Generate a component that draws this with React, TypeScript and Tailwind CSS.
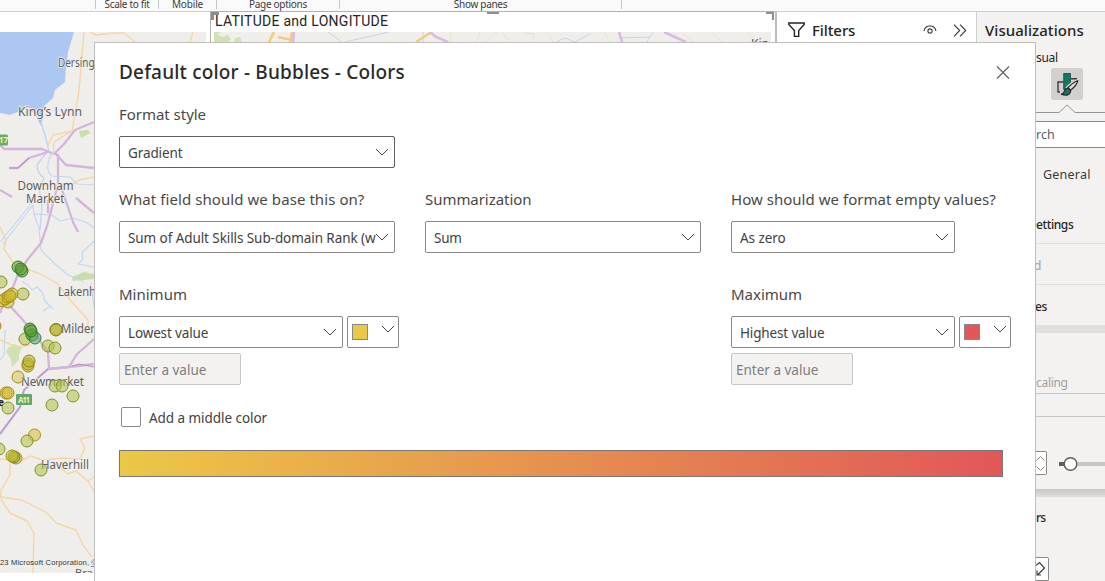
import type { ReactNode } from "react";

const INK = "#323130";

function Chevron({ className = "" }: { className?: string }) {
  return (
    <svg className={`shrink-0 ${className}`} width="14" height="8" viewBox="0 0 14 8" fill="none" stroke="#484644" strokeWidth="1">
      <path d="M1 1 L7 7 L13 1" />
    </svg>
  );
}

function Select({ text, width, spacing, dark = false }: { text: string; width: string; spacing: string; dark?: boolean }) {
  return (
    <div className={`flex h-8 items-center justify-between rounded-[2px] border bg-white pl-2 pr-[5px] ${dark ? "border-[#605e5c]" : "border-[#8a8886]"} ${width}`}>
      <span className={`mt-[3px] whitespace-nowrap text-[13.5px] text-[#424140] ${spacing}`}>{text}</span>
      <Chevron className={text.length > 30 ? "-ml-1" : ""} />
    </div>
  );
}

function ColorPick({ fill }: { fill: string }) {
  return (
    <div className="flex h-8 w-[52px] items-start justify-between rounded-[2px] border border-[#8a8886] bg-white pl-1 pr-[3px]">
      <div className={`mt-[7px] size-4 border border-[#8a8886] ${fill}`} />
      <Chevron className="mt-[8px]" />
    </div>
  );
}

function Label({ children, spacing }: { children: ReactNode; spacing: string }) {
  return <div className={`h-5 whitespace-nowrap text-[15px] leading-[18px] text-[#4a4846] ${spacing}`}>{children}</div>;
}

function EmptyInput() {
  return (
    <div className="mt-[5px] flex h-8 w-[122px] items-center rounded-[2px] border border-[#c8c6c4] bg-[#f3f2f1] pl-1">
      <span className="mt-[3px] text-[13.5px] tracking-[0px] text-[#807e7c]">Enter a value</span>
    </div>
  );
}

type Dot = [number, number, string, string];
const LIME = "#b5c34c";
const LIME_EDGE = "#7f9128";
const GOLD = "#cfba2c";
const GOLD_EDGE = "#a58b16";
const GREEN = "#5b9c33";
const GREEN_EDGE = "#2f7a20";

const dots: Dot[] = [
  [18, 267, GREEN, GREEN_EDGE], [22, 271, GREEN, GREEN_EDGE], [21, 269, GREEN, GREEN_EDGE],
  [1, 282, LIME, LIME_EDGE], [23, 294, LIME, LIME_EDGE],
  [2, 301, GOLD, GOLD_EDGE], [8, 302, GOLD, GOLD_EDGE], [5, 299, GOLD, GOLD_EDGE], [8, 297, GOLD, GOLD_EDGE], [12, 294, GOLD, GOLD_EDGE], [10, 296, GOLD, GOLD_EDGE],
  [-5, 326, GOLD, GOLD_EDGE], [25, 339, LIME, LIME_EDGE], [32, 335, GREEN, GREEN_EDGE], [35, 338, "#63a567", "#368044"], [30, 329, GREEN, GREEN_EDGE], [31, 331, GREEN, GREEN_EDGE],
  [56, 329.5, "#b8b52c", "#858616"], [56, 330, "#b8b52c", "#858616"], [48, 346, LIME, LIME_EDGE], [55, 348, LIME, LIME_EDGE],
  [28, 366, GOLD, GOLD_EDGE], [28, 364, "#b8b52c", GOLD_EDGE], [29, 361, "#b8b52c", "#858616"],
  [18, 377, "#d6c85e", GOLD_EDGE], [6, 393, GOLD, GOLD_EDGE], [8, 393, GOLD, GOLD_EDGE], [8, 408, LIME, LIME_EDGE],
  [55, 386, LIME, LIME_EDGE], [62, 386, LIME, LIME_EDGE], [73, 396, LIME, LIME_EDGE], [52, 405, LIME, LIME_EDGE],
  [34.5, 435, "#d9bd48", "#b09228"], [27, 441, LIME, LIME_EDGE], [-1, 449, LIME, LIME_EDGE],
  [16, 458, "#dfb33a", "#bd8c1c"], [14, 457, "#83a92e", "#5e8f22"], [12, 456, GOLD, GOLD_EDGE], [41, 470, LIME, LIME_EDGE],
];

function MainMap() {
  return (
    <svg className="block" width="206" height="541" viewBox="0 32 206 541" fontFamily="'Noto Sans', sans-serif">
      <rect y="32" width="206" height="541" fill="#f0eeeb" />
      <path d="M0 32 H74 L68 52 L66 67 L65 82 L55 90 L53 98 L44 106 L43 117 L41 126 L35 114 L29 108 L20 111 L10 115 L0 113Z" fill="#abc7f2" />
      <path d="M79 131 L88 130 L90 133 L81 138Z M72 277 L84 272 L94 274 L94 279 L73 281Z" fill="#c9dda9" />
      <path d="M8 348 L14 344 L22 347 L19 355 L19 360 L12 367 L11 359 L6 352Z" fill="#cfe2b1" />
      <g fill="none" stroke="#bfd7f2" strokeWidth="1.1" strokeLinejoin="round">
        <path d="M41 122 L46 139 L49 151 M46 153 L37 165 Q37 173 44 178 L39 188 L42 207 L40 230" strokeWidth="1.4" />
        <path d="M51 154 Q44 170 52 176 L70 177 L77 184 L94 185" />
        <path d="M32 203 L0 242 M33 205 L3 244 M33 205 L34 214 L39 228 L41 250 L54 263 L68 275 L84 282" />
        <path d="M34 214 L52 215 L60 221 L72 218 L86 222 L94 228 M94 241 L86 249 L82 252 L83 259 L78 264 L94 267" />
        <path d="M22 281 L28 285 L32 290 L37 287 L42 292 L45 301 L50 306 L43 311 M45 301 L53 309 M91 283 L94 307 M5 330 L4 355 L0 360" />
      </g>
      <g fill="none" stroke="#d3b5dc" strokeWidth="2.3" strokeLinejoin="round">
        <path d="M0 145 L4 149 L42 149 L54 154 L64 144 L75 130 L94 122" />
        <path d="M9 168 L18 168 L29 158 L48 152 M55 153 L66 165 L94 168" />
        <path d="M58 154 L58 184 L51 211 L47 226 L41 243 L28 259 L19 272 L11 292 L3 305 L0 313" />
        <path d="M60 184 L73 222 L78 232" />
        <path d="M0 190 L12 197 M76 198 L94 213 M48 200 L48 213" />
        <path d="M10 306 L22 319 L34 333 L48 352 L49 369 L78 366 L94 364" />
        <path d="M94 339 L84 348 L77 354 L69 367 L48 369 L24 390 L20 407 L0 434" />
      </g>
      <path d="M9 168 L18 168 L29 158 M72 366 L79 364 L94 367 M48 369 L24 390 L20 407 L0 434" stroke="#b795c4" strokeWidth="1.1" fill="none" />
      <g fill="none" stroke="#f4d6a5" strokeWidth="1.4" strokeLinejoin="round">
        <path d="M84 32 L82 55 L80 80 L78 97 L72 131 L53 135 L48 145 M53 155 L54 142 L70 132" />
        <path d="M90 32 L96 35 L113 33 L124 33 L135 42 M193 32 L190 42" />
        <path d="M94 177 L79 180 L70 186 M0 227 L6 240 L4 249 L15 265 L38 273 L57 283 L71 301 L88 320 L88 325" />
        <path d="M0 340 L17 347 L31 345 M0 459 L20 461 L31 456 L42 460 L62 458 L80 459 L85 448 L80 439 L94 436 M55 464 L68 474 L76 471 L88 481 L94 477 M88 481 L94 492" />
        <path d="M10 461 L10 475 L1 490 L1 498 M0 497 L22 500 L47 513 L56 523 L76 530 L83 545 L92 557 M1 499 L10 513 L27 521 L34 533 L33 573" />
      </g>
      <g fill="#5d5e60" stroke="#f0eeeb" strokeWidth="1.6" paintOrder="stroke" fontSize="11.7">
        <text x="58" y="67" textLength="36.5" lengthAdjust="spacingAndGlyphs">Dersing</text>
        <text x="18" y="116" textLength="64" lengthAdjust="spacingAndGlyphs">King’s Lynn</text>
        <text x="17.500" y="189.500" textLength="56" lengthAdjust="spacingAndGlyphs">Downham</text>
        <text x="26" y="202.500" textLength="38.500" lengthAdjust="spacingAndGlyphs">Market</text>
        <text x="58" y="295.500" textLength="38" lengthAdjust="spacingAndGlyphs">Lakenh</text>
        <text x="61" y="332.500" textLength="34" lengthAdjust="spacingAndGlyphs">Milder</text>
        <text x="21" y="385.500" textLength="63" lengthAdjust="spacingAndGlyphs">Newmarket</text>
        <text x="41" y="468.500" textLength="48" lengthAdjust="spacingAndGlyphs">Haverhill</text>
        <text x="75" y="577" fontSize="11">Bra</text>
      </g>
      <rect x="-8" y="134.500" width="16" height="11" rx="1.5" fill="#69ad6c" />
      <text x="-1" y="143" fontSize="8" fontWeight="700" fill="#f7f3a6">17</text>
      <rect x="16" y="394" width="16" height="11" rx="1" fill="#5fa672" />
      <text x="18" y="402.500" fontSize="8" fontWeight="700" fill="#f7f3a6" textLength="12">A11</text>
      <text x="-2" y="406" fontSize="10" fontWeight="700" fill="#222">e</text>
      {dots.map(([x, y, fill, stroke], i) => (
        <circle key={i} cx={x} cy={y} r="6" fill={fill} fillOpacity="0.58" stroke={stroke} strokeWidth="1" />
      ))}
      <text x="0" y="565" fontSize="7.5" fontFamily="'Liberation Sans', sans-serif" fill="#333" textLength="89">23 Microsoft Corporation,</text>
      <text x="91" y="565" fontSize="7.5" fontFamily="'Liberation Sans', sans-serif" fill="#3b66b8" textDecoration="underline">©</text>
    </svg>
  );
}

function StripMap() {
  return (
    <svg className="block" width="557" height="12" viewBox="214 32 557 12">
      <rect x="214" y="32" width="557" height="12" fill="#f0eeeb" />
      <path d="M214 32 H220 L218 35 L223 37 L228 35 L231 39 L227 44 H214Z M235 38 L240 37 L242 42 H234Z" fill="#cfe3b3" />
      <g fill="none" strokeWidth="1">
        <path d="M328 32 L342 42 M389 32 L345 42 M423 32 V42 M556 42 L565 38 L575 42 L590 34 M620 38 L650 37 M653 32 L647 42" stroke="#c5d5ec" />
        <path d="M450 32 L451 42 M480 32 L476 42 M497 32 L485 42 M502 32 L510 42 M522 33 L534 34 L533 42 M548 33 L553 42 M604 32 L610 42 M681 33 L694 42 M712 33 L722 42 M748 32 L757 42" stroke="#ede4c4" />
        <path d="M274 32 L269 42 M278 37 L292 40 M292 32 L290 42 M430 33 L416 42" stroke="#f4ca80" strokeWidth="2.6" />
        <path d="M294 32 L293 42 M430 32 L436 37 L448 42 M619 32 L622 42 M664 32 L686 42" stroke="#d6bce0" strokeWidth="2.6" />
      </g>
      <text x="751" y="48" fontSize="12" fontFamily="'Noto Sans', sans-serif" fill="#555">Kin</text>
    </svg>
  );
}

function Ribbon() {
  const t = "-mt-[3px] h-[14px] whitespace-nowrap text-center text-[10px] leading-[14px]";
  return (
    <div className="flex h-3 border-b border-[#d2d0ce] bg-[#fafafa] text-[#3b3a39]">
      <div className="h-[9px] w-24 border-r border-[#c8c6c4]" />
      <div className="h-[9px] w-[63px] border-r border-[#c8c6c4]"><div className={`${t} tracking-[-0.3px]`}>Scale to fit</div></div>
      <div className="h-[9px] w-[58px] border-r border-[#c8c6c4]"><div className={`${t} tracking-[-0.15px]`}>Mobile</div></div>
      <div className="h-[9px] w-[123px] border-r border-[#c8c6c4]"><div className={`${t} tracking-[-0.3px]`}>Page options</div></div>
      <div className="h-[9px] w-[282px] border-r border-[#c8c6c4]"><div className={`${t} tracking-[-0.3px]`}>Show panes</div></div>
    </div>
  );
}

function Filters() {
  return (
    <div className="flex h-9 items-center border-l-2 border-[#bdbbb9] bg-white pl-[11px] pr-[4px]">
      <svg width="17" height="16" viewBox="0 0 17 16" fill="none" stroke="#252423" strokeWidth="1.4">
        <path d="M0.8 1 H16.2 V2.5 L10.7 8.5 V14.4 H6.4 V8.5 L0.8 2.5Z" />
      </svg>
      <span className="ml-[7px] text-[15px] font-medium tracking-[-0.1px] text-[#252423]">Filters</span>
      <svg className="ml-auto" width="14" height="10" viewBox="0 0 14 10" fill="none" stroke="#3b3a39" strokeWidth="1.1">
        <path d="M1 6 Q2 1 7 1 Q12 1 13 6" />
        <circle cx="7" cy="6" r="2.1" />
      </svg>
      <svg className="ml-[16px] mr-[5px]" width="14" height="13" viewBox="0 0 14 13" fill="none" stroke="#3b3a39" strokeWidth="1.1">
        <path d="M1 0.7 L6.700 6.500 L1 12.300 M7 0.700 L12.700 6.500 L7 12.300" />
      </svg>
    </div>
  );
}

function FormatIcon() {
  return (
    <svg className="block rounded-[2px] bg-[#d2d0ce]" width="32" height="32" viewBox="0 0 32 32" fill="none">
      <path d="M12.500 14 H7 V24 H9 M20 10.700 H26" stroke="#3b3a39" strokeWidth="1.4" />
      <path d="M12.700 5.500 H19.500 V17 L14 21.500 H12.700Z" fill="#117865" stroke="#2b5049" strokeWidth="0.9" />
      <path d="M15.500 20.500 Q21 14.500 26.500 13 Q27 15 19.700 23" fill="#f3f2f1" stroke="#d2d0ce" strokeWidth="3" />
      <path d="M16.700 20 Q22 14.500 26.700 12.800 Q26 17 19.300 22.500Z" fill="#e1dfdd" stroke="#252423" strokeWidth="1.2" />
      <path d="M10 26.200 Q12.500 25.800 13.500 22.800 Q14.700 20.200 17 20.300 Q19.700 21 19.600 23.700 Q18.500 28.800 10 26.200Z" fill="#117865" stroke="#252423" strokeWidth="1.1" />
    </svg>
  );
}

function Visualizations() {
  return (
    <div className="flex h-full flex-col border-l border-[#d2d0ce] bg-[#f3f2f1] text-[12.5px] text-[#252423]">
      <div className="h-9 whitespace-nowrap pl-2 text-[15px] font-medium leading-9 tracking-[0.05px]">Visualizations</div>
      <div className="flex h-[533px] flex-col pl-[59px]">
        <div className="h-5 text-[12px] leading-[19px] tracking-[-0.3px]">sual</div>
        <div className="pl-[15px]"><FormatIcon /></div>
        <svg className="mt-[4px] block" width="69" height="9" viewBox="0 0 69 9" fill="none" stroke="#979593" strokeWidth="1">
          <path d="M0 8.500 H23 L31 1 L39 8.500 H69" />
        </svg>
        <div className="mt-2 h-[27px] border-y border-[#8a8886] bg-white leading-[26px] tracking-[0.1px] text-[#605e5c]">rch</div>
        <div className="mt-[16px] h-5 pl-[7px] leading-[21px] tracking-[0.22px] text-[#3b3a39]">General</div>
        <div className="mt-[20px] h-10 border-b border-[#e1dfdd] text-[12px] font-medium leading-[41px] tracking-[-0.4px]">ettings</div>
        <div className="h-[41px] border-b border-[#e1dfdd] text-[12px] leading-[43px] text-[#a19f9d] -ml-0.5">d</div>
        <div className="h-10 text-[12px] font-medium leading-[43px] tracking-[-0.5px] -ml-0.5 pl-px">es</div>
        <div className="h-2 bg-[#e1dfdd]" />
        <div className="h-[61px] border-b border-[#c8c6c4] pt-[39px] text-[12px] leading-[21px] tracking-[-0.3px] text-[#a19f9d]">caling</div>
        <div className="h-[23px] border-b border-[#c8c6c4]" />
        <div className="flex h-[72px] items-start pt-[34px]">
          <div className="flex h-6 w-[11px] items-center rounded-r-[2px] border border-l-0 border-[#8a8886] bg-white">
            <svg width="9" height="18" viewBox="0 0 9 18" fill="none" stroke="#797775" strokeWidth="0.9"><path d="M0.500 6.500 L4.500 2.500 L8.500 6.500 M0.500 12.500 L4.500 16.500 L8.500 12.500" /></svg>
          </div>
          <svg className="ml-3 mt-[5px]" width="46" height="16" viewBox="0 0 46 16">
            <path d="M0 8 H8" stroke="#605e5c" strokeWidth="4" />
            <path d="M16 8 H46" stroke="#c8c6c4" strokeWidth="4" />
            <circle cx="11.500" cy="8" r="6.300" fill="#fff" stroke="#605e5c" strokeWidth="1.4" />
          </svg>
        </div>
        <div className="h-2 bg-gradient-to-b from-[#c8c6c4] to-[#e1dfdd]" />
        <div className="h-[60px] pt-[11px] text-[12px] font-medium leading-5 tracking-[-0.8px]">rs</div>
        <div className="flex h-6 w-[13px] shrink-0 items-center rounded-r-[2px] border border-l-0 border-[#8a8886] bg-white">
          <svg width="11" height="16" viewBox="0 0 11 16" fill="none" stroke="#3b3a39" strokeWidth="1.2"><path d="M0 4.500 L3.500 1.500 L8.500 7 L2 13.500 M1 9.500 V14 H5" /></svg>
        </div>
      </div>
    </div>
  );
}

function ColorDialog() {
  return (
    <div className="absolute left-[94px] top-[42px] h-[545px] w-[942px] border border-[#c0bebc] bg-white pl-6 pr-6">
      <div className="flex justify-between pt-[15px]">
        <h1 className="h-7 whitespace-nowrap text-[19px] font-medium leading-7 tracking-[0.18px] text-[#2b2a29]">Default color - Bubbles - Colors</h1>
        <svg className="mr-px mt-[8px]" width="14" height="13" viewBox="0 0 14 13" fill="none" stroke="#605e5c" strokeWidth="1.1">
          <path d="M1 0.500 L13 12.500 M13 0.500 L1 12.500" />
        </svg>
      </div>
      <div className="mt-[19px] flex flex-col gap-[11px]">
        <Label spacing="tracking-[-0.03px]">Format style</Label>
        <Select text="Gradient" width="w-[276px]" spacing="tracking-[-0.1px]" dark />
      </div>
      <div className="mt-[22px] flex gap-[30px]">
        <div className="flex flex-col gap-[11px]">
          <Label spacing="tracking-[0.07px]">What field should we base this on?</Label>
          <Select text="Sum of Adult Skills Sub-domain Rank (w" width="w-[276px]" spacing="tracking-[-0.08px]" />
        </div>
        <div className="flex flex-col gap-[11px]">
          <Label spacing="tracking-[-0.05px]">Summarization</Label>
          <Select text="Sum" width="w-[276px]" spacing="tracking-[-0.2px]" />
        </div>
        <div className="flex flex-col gap-[11px]">
          <Label spacing="tracking-[0.03px]">How should we format empty values?</Label>
          <Select text="As zero" width="w-[224px]" spacing="tracking-[-0.05px]" />
        </div>
      </div>
      <div className="mt-[32px] flex gap-[332px]">
        <div>
          <Label spacing="tracking-[0px]">Minimum</Label>
          <div className="mt-[11px] flex gap-1">
            <Select text="Lowest value" width="w-[224px]" spacing="tracking-[-0.15px]" />
            <ColorPick fill="bg-[#ebc846]" />
          </div>
          <EmptyInput />
        </div>
        <div>
          <Label spacing="tracking-[0px]">Maximum</Label>
          <div className="mt-[11px] flex gap-1">
            <Select text="Highest value" width="w-[224px]" spacing="tracking-[-0.15px]" />
            <ColorPick fill="bg-[#e15759]" />
          </div>
          <EmptyInput />
        </div>
      </div>
      <div className="mt-[22px] flex h-5 items-center pl-0.5">
        <div className="size-5 rounded-[2px] border border-[#8a8886] bg-white" />
        <span className="ml-2 mt-[3px] text-[13.5px] tracking-[-0.05px] text-[#424140]">Add a middle color</span>
      </div>
      <div className="mt-[23px] h-[27px] w-[884px] border border-[#797775] bg-linear-to-r/srgb from-[#ebc846] to-[#e15759]" />
    </div>
  );
}

export default function App() {
  return (
    <div className="relative h-[581px] w-[1105px] overflow-hidden bg-white font-['Noto_Sans',sans-serif]" style={{ color: INK }}>
      <Ribbon />
      <div className="flex h-[569px]">
        <div className="w-[210px] bg-white pt-5"><MainMap /></div>
        <div className="-mt-px h-[570px] w-[565px] border-l border-t border-[#b3b0ad] bg-white">
          <div className="flex h-5 items-start justify-between">
            <div className="flex w-[276px]">
              <div className="h-2 w-2 shrink-0 border-l-[3px] border-t-[3px] border-[#8f8d8b]" />
              <span className="-ml-[4px] mt-px whitespace-nowrap font-['Roboto',sans-serif] text-[14px] leading-[17px] tracking-[0.28px] text-[#252423]">LATITUDE and LONGITUDE</span>
            </div>
            <div className="h-0.5 w-3 bg-[#8f8d8b]" />
            <div className="ml-auto mr-px h-2 w-2 border-r-2 border-t-2 border-[#8f8d8b]" />
          </div>
          <div className="pl-[3px]"><StripMap /></div>
        </div>
        <div className="w-[201px]"><Filters /></div>
        <div className="w-[129px]"><Visualizations /></div>
      </div>
      <ColorDialog />
    </div>
  );
}
